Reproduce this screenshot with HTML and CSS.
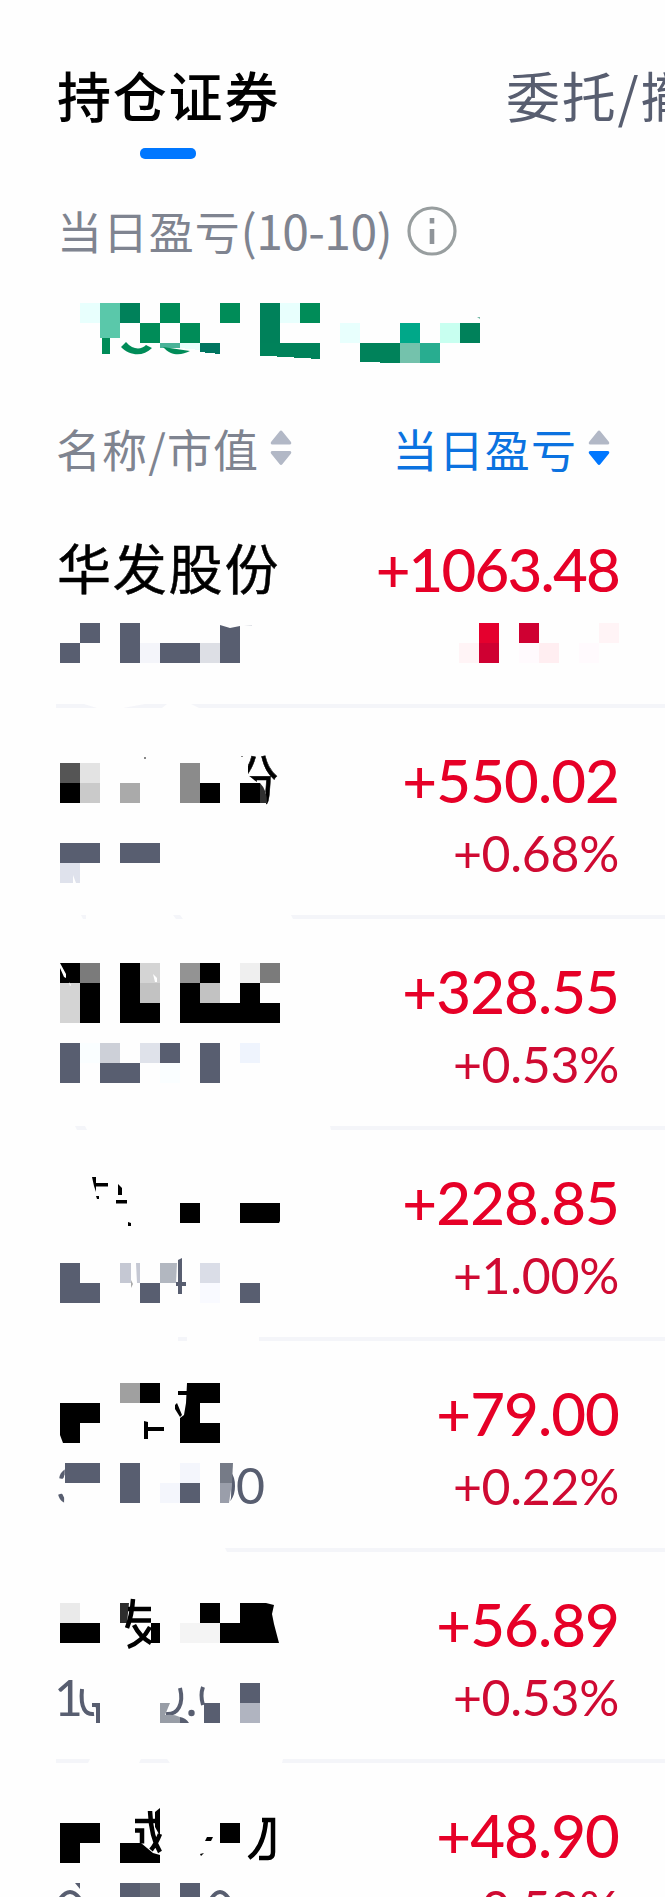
FILE: index.html
```html
<!DOCTYPE html>
<html lang="zh-CN">
<head>
<meta charset="utf-8">
<title>持仓证券</title>
<link rel="stylesheet" href="styles.css">
</head>
<body>
<main class="page">
  <nav class="tabs">
    <div class="tab tab-active">持仓证券</div>
    <div class="tab">委托/撤单</div>
  </nav>

  <section class="summary">
    <div class="summary-label">
      <span>当日盈亏<span class="date">(10-10)</span></span>
      <svg class="info" viewBox="0 0 50 50"><circle cx="25" cy="25" r="23" fill="none" stroke="#989e9f" stroke-width="3.2"/><path d="M25 12v5.5M25 23v15" stroke="#8f9499" stroke-width="4.6"/></svg>
    </div>
    <svg class="total" viewBox="0 290 665 80" fill="#008c58" shape-rendering="crispEdges">
      <path fill="#e8fffd" d="M80 303h20v20H80zM280 303h20v20h-20zM340 323h20v20h-20z"/>
      <path fill="#5ac8aa" d="M100 303h20v35h-20z"/>
      <path fill="#00815a" d="M120 303h20v20h-20zM260 303h20v40h-20zM460 323h20v20h-20z"/>
      <path d="M160 303h20v20h-20zM220 303h20v20h-20zM140 323h20v20h-20zM180 323h20v20h-20zM300 303h20v20h-20z"/>
      <path fill="#00a889" d="M400 323h20v20h-20z"/><path fill="#c8fff0" d="M440 323h20v20h-20z"/>
      <path fill="#00825a" d="M260 343h60v16l-60-3.5zM360 343h40v20l-40-1z"/>
      <path fill="#74c2ac" d="M400 343h20v20h-20z"/><path fill="#28ad90" d="M420 343h20v20h-20z"/>
      <path fill="#007560" d="M200 343h20v11l-20-2z"/>
      <path fill="#4ab398" d="M160 343h20v5h-20z"/><path fill="#e8fffa" d="M180 343h20v7l-20-2z"/>
      <g shape-rendering="auto"><path d="M102 338h8v16h-8z"/><path d="M121 347l5-5c7 8 15 8 20 3l6 3c-9 9-22 8-31-1zM163 347l27 4c-8 4-18 6-27-4z"/><path fill="#75b9a6" d="M477 317l3 0v2z"/></g>
    </svg>
  </section>

  <header class="columns">
    <div class="column">名称/市值<svg class="sort" viewBox="0 0 22 36"><path class="idle" d="M9.5 1.5q1.5-2 3 0l8.500 10.500q1 2.500-1.500 2.500h-17q-2.500 0-1.500-2.500zM9.500 34q1.500 2 3 0l8.500-10.500q1-2.500-1.500-2.500h-17q-2.500 0-1.500 2.500z"/></svg></div>
    <div class="column column-sorted">当日盈亏<svg class="sort" viewBox="0 0 22 36"><path class="idle" d="M9.500 1.500q1.500-2 3 0l8.500 10.500q1 2.500-1.500 2.500h-17q-2.500 0-1.500-2.500z"/><path class="current" d="M9.500 34q1.500 2 3 0l8.500-10.500q1-2.500-1.500-2.500h-17q-2.500 0-1.500 2.500z"/></svg></div>
  </header>

  <section class="holdings">
    <article class="row">
      <svg class="security" viewBox="0 497 340 211">
        <text class="name" x="57" y="589.5">华发股份</text>
        <path class="slate" d="M80 623h20v20H80zM60 643h20v20H60zM120 623h20v40h-20zM160 643h40v20h-40zM220 625l10 3 10-2v37h-20z"/>
        <path fill="#f4f5fa" d="M140 643h20v20h-20z"/><path fill="#dddfe5" d="M200 643h20v20h-20z"/>
        <path fill="#dddfe5" d="M244 626l8-1v1z"/>
        <path class="line" d="M56 704h28l13 4H56zM123 708l22-4h22l-5 4zM191 704h149v4H199z"/>
      </svg>
      <div class="gain">
        <div class="amount amount-long">+1063.48</div>
        <svg class="masked-rate" viewBox="460 623 160 40" shape-rendering="crispEdges"><path fill="#fff4f6" d="M460 643h20v20h-20zM600 623h20v20h-20z"/><path fill="#e5002e" d="M480 623h20v20h-20z"/><path fill="#cf0032" d="M480 643h20v20h-20zM520 623h20v20h-20z"/><path fill="#fffafd" d="M520 643h20v20h-20zM580 643h20v20h-20z"/><path fill="#ffeef1" d="M540 643h20v20h-20z"/></svg>
      </div>
    </article>

    <article class="row">
      <svg class="security" viewBox="0 708 340 211">
        <clipPath id="share"><path d="M248 755h32v50h-14v-12l-8-10-10-8z"/></clipPath>
        <text class="name" x="57" y="800.5" clip-path="url(#share)">华发股份</text>
        <path fill="#555" d="M60 763h20v20H60z"/><path fill="#e3e3e3" d="M80 763h20v20H80z"/><path fill="#cacaca" d="M80 783h20v20H80z"/><path fill="#aaa" d="M120 783h20v20h-20z"/><path fill="#8b8b8b" d="M180 763h20v40h-20z"/>
        <path d="M60 783h20v20H60zM200 783h20v20h-20zM240 783h20v20h-20z"/><path fill="#303030" d="M260 783q7 7 7 20h-7z"/>
        <path fill="#888" d="M144 757h2v2h-2zM241 756h2v1h-2z"/>
        <path class="slate" d="M60 843h40v20H60zM120 843h40v20h-40z"/><path fill="#dfe2ec" d="M60 863h20v20h-4l-3-8v8H60z"/>
        <path class="line" d="M81 915h5v4h-3zM173 915h7l3 4h-7zM291 915h49v4h-47z"/>
      </svg>
      <div class="gain"><div class="amount">+550.02</div><div class="rate">+0.68%</div></div>
    </article>

    <article class="row">
      <svg class="security" viewBox="0 919 340 211">
        <path d="M60 963h20v20H60zM80 983h20v40H80zM120 963h20v60h-20zM140 1003h20v20h-20zM200 963h20v20h-20zM180 983h20v20h-20zM180 1003h100v20H180zM240 983h20v20h-20z"/>
        <path fill="#7b7b7b" d="M80 963h20v20H80zM260 963h20v20h-20z"/><path fill="#d4d4d4" d="M60 983h20v40H60zM140 963h20v20h-20z"/><path fill="#c2c2c2" d="M140 983h20v20h-20zM200 983h20v20h-20z"/><path fill="#939393" d="M180 963h20v20h-20z"/><path fill="#efefef" d="M240 963h20v20h-20z"/>
        <path fill="#fff" d="M60 963l6 11v4l-2-1-4-9zM153 974l4 4v4h-2z"/><path fill="#fff" d="M69 982l2 3-1 1z"/>
        <path class="slate" d="M60 1043h20v40H60zM160 1043h20v20h-20zM100 1063h40v20h-40zM200 1043h20v40h-20z"/>
        <path fill="#cdd0d8" d="M100 1043h20v20h-20z"/><path fill="#dfe2ea" d="M140 1043h20v20h-20z"/><path fill="#eff4fd" d="M240 1043h20v20h-20z"/><path fill="#fafeff" d="M80 1043h20v20H80zM160 1063h20v20h-20z"/>
        <path class="line" d="M75 1126h10l2 4H77zM330 1126h10v4h-9z"/>
      </svg>
      <div class="gain"><div class="amount">+328.55</div><div class="rate">+0.53%</div></div>
    </article>

    <article class="row">
      <svg class="security" viewBox="0 1130 340 211">
        <path d="M180 1203h20v20h-20zM240 1203h40v18l-1 2h-39z"/>
        <path d="M92 1177h4v6h12v3.500H96v5.500l-2-6zM118 1184l4 4v7h-4zM116 1200h11v3.500h-11zM96 1196h3v3h-2zM128 1222l3 1v3h-3z"/>
        <path class="slate" d="M60 1263h20v20h20v20H60zM140 1283h20v20h-20zM240 1283h20v20h-20zM178 1260l4-2v24h4v4h-4v8h-4v-8h-2v-4h2z"/>
        <path fill="#c5c8d3" d="M120 1263h11v20h-11zM136 1263h4v20h-3z"/><path fill="#b2b7c0" d="M160 1263h17l-1 20h-16z"/><path fill="#dadde7" d="M200 1263h20v20h-20z"/><path fill="#f9faff" d="M200 1283h20v20h-20z"/><path fill="#aaa" d="M131 1280l2 4-2 4z"/>
        <path class="line" d="M178 1337h9v4h-9zM259 1337h81v4h-81z"/>
      </svg>
      <div class="gain"><div class="amount">+228.85</div><div class="rate">+1.00%</div></div>
    </article>

    <article class="row">
      <svg class="security" viewBox="0 1341 340 211">
        <path fill="#a0a0a0" d="M120 1383h20v20h-20z"/>
        <path d="M140 1383h20v20h-20zM60 1403h40v20H80v20H63l-3-8zM187 1383h33v20h-20v20h20v20h-40v-25l4-3 2-12zM178 1391h9v4h-9zM175 1405l2-2 5 12-2 2-5-8zM144 1421l4 1v5h16v4h-16v8h-4z"/>
        <clipPath id="tail"><path d="M232 1460h40v50h-44l3-12z"/></clipPath>
        <text class="value" x="207.500" y="1504" clip-path="url(#tail)">00</text>
        <clipPath id="head"><path d="M56 1460h9l-1 45h-8z"/></clipPath>
        <text class="value" x="56" y="1504" clip-path="url(#head)">3</text>
        <path class="slate" d="M65 1463h35v20H65zM120 1463h20v40h-20zM180 1483h20v20h-20z"/>
        <path fill="#f4f6fc" d="M180 1463h20v20h-20zM160 1483h20v20h-20z"/><path fill="#767b87" d="M220 1463h13l-1 20h-12z"/><path fill="#9a9eaa" d="M220 1483h12l-3 20h-9z"/>
        <path class="line" d="M225 1548h115v4H227z"/>
      </svg>
      <div class="gain"><div class="amount">+79.00</div><div class="rate">+0.22%</div></div>
    </article>

    <article class="row">
      <svg class="security" viewBox="0 1552 340 211">
        <path fill="#eaeaea" d="M60 1603h20v20H60z"/><path fill="#2d2d2d" d="M120 1603h9l-2 20h-7z"/><path fill="#f4f4f4" d="M180 1623h40v20h-40z"/>
        <path d="M60 1623h40v20H60zM151 1623h9v20h-9zM200 1603h20v20h-20zM240 1603h26l8 2-2 9 2 10 5 19h-59v-20h20z"/>
        <path class="stroke" d="M133 1599q-1 16-6 29M128 1609h23M130 1620.500h21M134 1625q6 12 17 18M150 1627q-8 15-22 20"/>
        <text class="value" x="54" y="1716">1</text>
        <path class="thin" d="M82 1689c-2 20 4 26 12 25M92 1705h5M180 1688c4 16-2 27-14 26M203 1687q-3 8 0 18"/>
        <circle class="slate" cx="191.500" cy="1713" r="3.200"/>
        <path class="slate" d="M95 1703h5v20h-4v-14zM204 1703h16v20h-16zM240 1683h20v20h-20zM180 1717q6 1 9 6h-9z"/>
        <path fill="#989da6" d="M160 1703h10l-5 12q9-1 15 2v6h-20z"/><path fill="#b0b4c0" d="M240 1703h20v20h-20z"/>
        <path class="line" d="M56 1759h34l-2 4H56zM141 1759h26l3 4h-31zM283 1759h57v4h-58z"/>
      </svg>
      <div class="gain"><div class="amount">+56.89</div><div class="rate">+0.53%</div></div>
    </article>

    <article class="row">
      <svg class="security" viewBox="0 1763 340 211">
        <path d="M60 1823h40v20H80v20H60zM120 1843h21l12 10 7 2v8h-40zM220 1823h20v20h-20zM207 1837h6l-2 4h-6zM200 1854l4-1-3 3zM155 1812l5-4v28l-5-9z"/>
        <path class="stroke" d="M135 1821h25M135 1830.500h7v13M150 1811q1 26 10 41M160 1834q-4 10-9 16M262 1820h11v32q0 6-5 6h-9M266 1820q-2 27-17 38"/>
        <path class="slate" d="M75 1883h5v6zM120 1883h20v20h-20zM180 1883h20v20h-20z"/><path fill="#686c78" d="M140 1883h20v20h-20z"/>
        <path class="thin" d="M60 1899q10-14 20 0M211 1899q9-14 18 0"/>
      </svg>
      <div class="gain"><div class="amount">+48.90</div><div class="rate">+0.50%</div></div>
    </article>
  </section>
</main>
</body>
</html>
```
FILE: styles.css
```css
* { box-sizing: border-box; }

html, body { margin: 0; overflow: hidden; }

.page {
  width: 665px;
  height: 1897px;
  overflow: hidden;
  background: #fefefe;
  font-family: "Noto Sans CJK SC", sans-serif;
  color: #000;
}

.tabs {
  display: flex;
  height: 159px;
  padding: 65px 0 0 57px;
}

.tab {
  flex: 0 0 449px;
  font-size: 54px;
  line-height: 60px;
  letter-spacing: 1.8px;
  white-space: nowrap;
  color: #585e70;
}

.tab-active { font-weight: 500; color: #000; }

.tab-active::after {
  content: "";
  display: block;
  width: 56px;
  height: 11px;
  margin: 23px 0 0 83px;
  border-radius: 5px;
  background: #0077ff;
}

.summary { height: 258px; padding-top: 39px; }

.summary-label {
  display: flex;
  align-items: center;
  gap: 15px;
  height: 66px;
  padding-left: 57px;
  font-size: 45px;
  line-height: 58px;
  letter-spacing: 0.9px;
  color: #7f8490;
}

.summary-label > span { padding-bottom: 2px; }

.date { font-size: 48px; letter-spacing: -0.6px; }

.info { width: 50px; height: 50px; }

.total { display: block; width: 665px; height: 80px; margin-top: 26px; }

.columns {
  display: flex;
  justify-content: space-between;
  height: 80px;
  padding: 0 55px 0 56px;
}

.column {
  display: flex;
  align-items: center;
  gap: 11px;
  height: 62px;
  font-size: 45px;
  letter-spacing: 1.1px;
  color: #7f8490;
}

.column-sorted { color: #0b72e0; }

.sort { width: 22px; height: 36px; }
.idle { fill: #b2b8c6; }
.current { fill: #0077ff; }

.row { display: flex; height: 211px; }

.security { flex: none; width: 340px; height: 211px; }

.gain {
  display: flex;
  flex: 1;
  flex-direction: column;
  align-items: flex-end;
  padding: 42px 46px 0 0;
  border-bottom: 4px solid #f4f5f9;
  font-family: Lato, sans-serif;
}

.amount {
  font-size: 60px;
  font-weight: 500;
  line-height: 60px;
  letter-spacing: -0.9px;
  color: #e60027;
}

.amount-long { letter-spacing: -1.8px; }

.rate {
  margin-top: 18px;
  font-size: 50px;
  line-height: 50px;
  letter-spacing: -0.3px;
  color: #cf0a32;
}

.masked-rate { width: 160px; height: 40px; margin-top: 24px; }

.name { font-size: 54px; letter-spacing: 1.8px; stroke: #000; stroke-width: 0.5px; }
.value { font-family: Lato, sans-serif; font-size: 50px; letter-spacing: -0.5px; fill: #585e70; }
.slate { fill: #585e70; }
.line { fill: #f4f5f9; }
.stroke { fill: none; stroke: #000; stroke-width: 4.5px; }
.thin { fill: none; stroke: #585e70; stroke-width: 4px; }
```
